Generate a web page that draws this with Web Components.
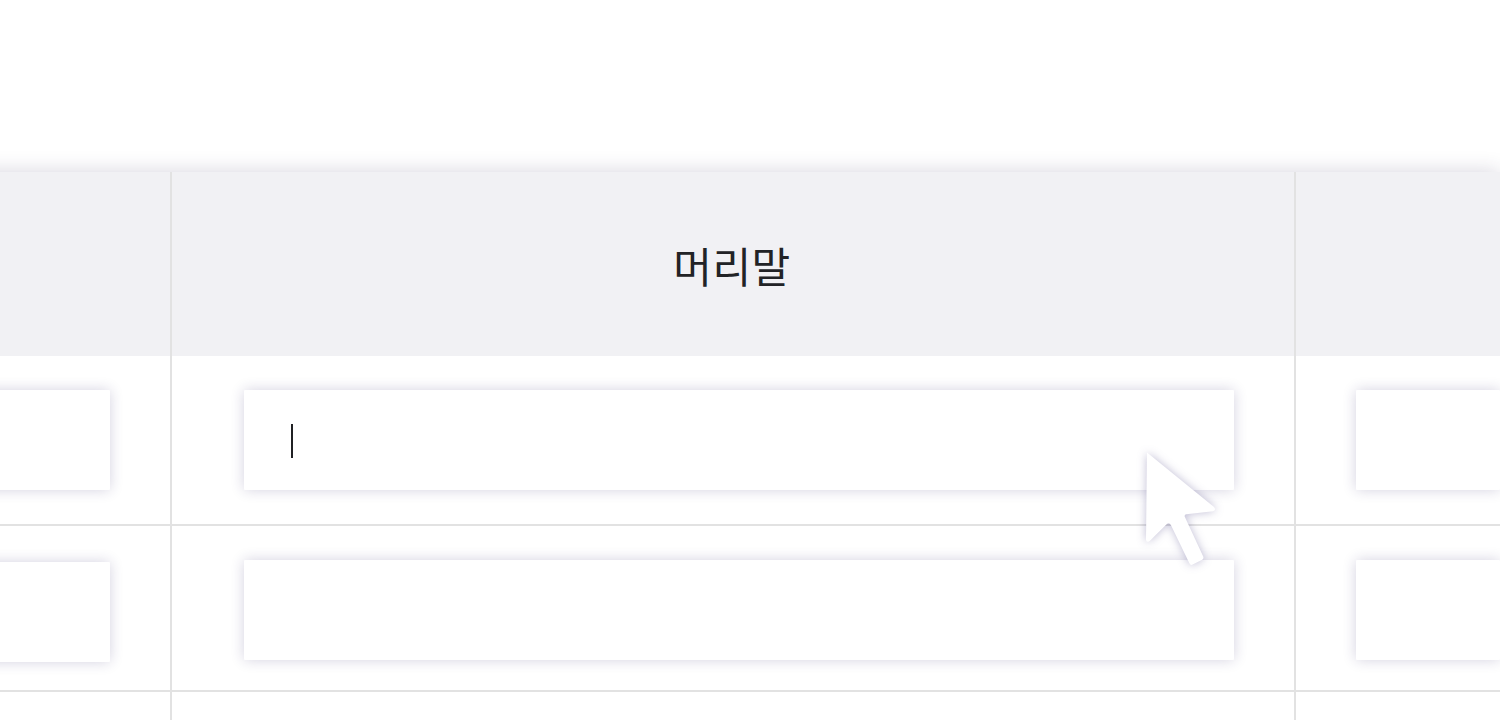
<!DOCTYPE html>
<html lang="ko">
<head>
<meta charset="utf-8">
<title>머리말</title>
<style>
  html, body {
    margin: 0;
    height: 720px;
    overflow: hidden;
    background: #fff;
  }
</style>
</head>
<body>
<sheet-page>
  <sheet-table>
    <sheet-row header>
      <sheet-cell></sheet-cell>
      <sheet-cell style="--cell-padding: 2px 2px 0 0">머리말</sheet-cell>
      <sheet-cell last></sheet-cell>
    </sheet-row>
    <sheet-row style="--row-height: 170px">
      <sheet-cell style="--cell-padding: 34px 60px 0 0"><text-field></text-field></sheet-cell>
      <sheet-cell style="--cell-padding: 34px 60px 0 72px"><text-field focused></text-field></sheet-cell>
      <sheet-cell last style="--cell-padding: 34px 0 0 60px"><text-field></text-field></sheet-cell>
    </sheet-row>
    <sheet-row style="--row-height: 166px">
      <sheet-cell style="--cell-padding: 36px 60px 0 0"><text-field></text-field></sheet-cell>
      <sheet-cell style="--cell-padding: 34px 60px 0 72px"><text-field></text-field></sheet-cell>
      <sheet-cell last style="--cell-padding: 34px 0 0 60px"><text-field></text-field></sheet-cell>
    </sheet-row>
    <sheet-row style="--row-height: 170px">
      <sheet-cell></sheet-cell>
      <sheet-cell></sheet-cell>
      <sheet-cell last></sheet-cell>
    </sheet-row>
  </sheet-table>
  <mouse-pointer slot="overlay"></mouse-pointer>
</sheet-page>

<script>
class SheetPage extends HTMLElement {
  connectedCallback() {
    this.attachShadow({ mode: 'open' });
    this.shadowRoot.innerHTML = `
      <style>
        :host {
          display: block;
          position: relative;
          box-sizing: border-box;
          width: 1500px;
          height: 720px;
          padding-top: 172px;
          overflow: hidden;
          color: #222326;
          font-family: "Noto Sans CJK KR", "Noto Sans", sans-serif;
        }
      </style>
      <slot></slot>
      <slot name="overlay"></slot>
    `;
  }
}

class SheetTable extends HTMLElement {
  connectedCallback() {
    this.attachShadow({ mode: 'open' });
    // the table runs past the left edge of the page
    this.shadowRoot.innerHTML = `
      <style>
        :host {
          display: flex;
          flex-direction: column;
          margin-left: -40px;
          background: #fff;
          box-shadow: 0 0 20px rgba(40, 30, 80, 0.19);
        }
      </style>
      <slot></slot>
    `;
  }
}

class SheetRow extends HTMLElement {
  connectedCallback() {
    this.attachShadow({ mode: 'open' });
    this.shadowRoot.innerHTML = `
      <style>
        :host {
          display: grid;
          grid-template-columns: 212px 1124px 204px;
          box-sizing: border-box;
          height: var(--row-height);
          border-bottom: 2px solid #e2e2e2;
        }
        :host([header]) {
          --row-height: 184px;
          --cell-display: flex;
          border-bottom: 0;
          background: #f1f1f4;
        }
      </style>
      <slot></slot>
    `;
  }
}

class SheetCell extends HTMLElement {
  connectedCallback() {
    this.attachShadow({ mode: 'open' });
    this.shadowRoot.innerHTML = `
      <style>
        :host {
          display: var(--cell-display, block);
          align-items: center;
          justify-content: center;
          box-sizing: border-box;
          padding: var(--cell-padding, 0);
          border-right: 2px solid #e2e2e2;
          font-size: 42px;
          line-height: 60px;
          letter-spacing: 0.5px;
        }
        :host([last]) {
          border-right: 0;
        }
      </style>
      <slot></slot>
    `;
  }
}

class TextField extends HTMLElement {
  connectedCallback() {
    this.attachShadow({ mode: 'open' });
    this.shadowRoot.innerHTML = `
      <style>
        :host {
          display: block;
          box-sizing: border-box;
          height: 100px;
          padding: 34px 47px;
          border-radius: 1px;
          background: #fff;
          box-shadow: 0 0 14px rgba(40, 30, 100, 0.2);
        }
        .caret {
          display: none;
          width: 2px;
          height: 34px;
          background: #202124;
        }
        :host([focused]) .caret {
          display: block;
        }
      </style>
      <div class="caret"></div>
    `;
  }
}

class MousePointer extends HTMLElement {
  connectedCallback() {
    this.attachShadow({ mode: 'open' });
    this.shadowRoot.innerHTML = `
      <style>
        :host {
          position: absolute;
          left: 1140px;
          top: 446px;
        }
        svg {
          display: block;
          overflow: visible;
          filter: drop-shadow(0 0 5px rgba(40, 30, 110, 0.3));
        }
      </style>
      <svg width="84" height="126" viewBox="0 0 84 126" fill="#fff">
        <path d="M7 6.4 L74 61 Q76.5 64 73.2 65.2 L46.2 68.2 Q43.9 68.8 45 71.3 L63.2 110.5 Q64 112.6 62.2 113.7 L52.7 118.6 Q50.5 119.6 49.5 117.5 L31 79.2 Q29.2 76 26.6 78.2 L9.7 94.9 Q6.2 97.2 6 93.6 Z"/>
      </svg>
    `;
  }
}

customElements.define('sheet-page', SheetPage);
customElements.define('sheet-table', SheetTable);
customElements.define('sheet-row', SheetRow);
customElements.define('sheet-cell', SheetCell);
customElements.define('text-field', TextField);
customElements.define('mouse-pointer', MousePointer);
</script>
</body>
</html>
